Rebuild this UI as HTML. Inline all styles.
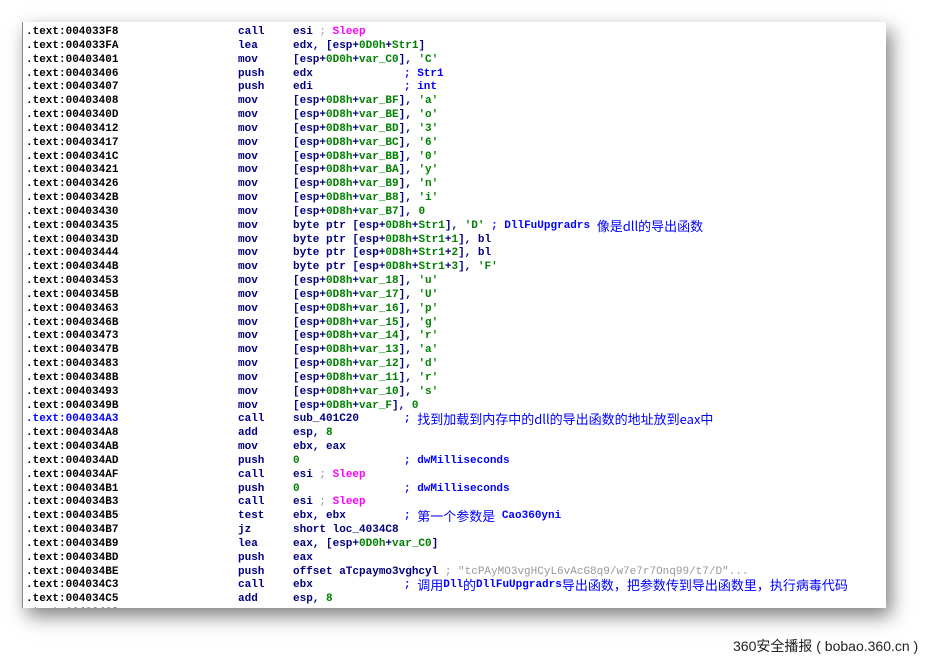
<!DOCTYPE html><html><head><meta charset="utf-8"><style>
body{margin:0;width:941px;height:664px;background:#fff;overflow:hidden;font-family:"Liberation Mono","Noto Sans CJK SC",monospace;}
#p{position:absolute;left:22px;top:22px;width:863px;height:586px;background:#fff;box-shadow:5px 8px 18px rgba(0,0,0,.5);overflow:hidden;border-left:1px solid #888}
.r{position:absolute;left:0;margin-top:2px;height:14px;font-size:11px;font-weight:bold;line-height:14px;white-space:pre;color:#000080}
.r span{position:absolute;top:0}
.a{left:3px;color:#000}.b{left:215px}.o{left:270px}.k{left:381px;color:#0000ff}
.g{position:static!important;color:#008000}.c{position:static!important;color:#0000ff}.m{position:static!important;color:#f0f}.s{position:static!important;color:#999;font-weight:normal}
.z{font-family:"Noto Sans CJK SC",sans-serif;font-weight:normal;font-size:13px;line-height:14px;vertical-align:top}
#f{position:absolute;left:733px;top:636px;font-family:"Liberation Sans","Noto Sans CJK SC",sans-serif;font-size:14px;color:#222}
</style></head><body><div id="p">
<div class="r" style="top:1px"><span class="a">.text:004033F8</span><span class="b">call</span><span class="o">esi <b class="s">;</b> <b class="m">Sleep</b></span></div>
<div class="r" style="top:15px"><span class="a">.text:004033FA</span><span class="b">lea</span><span class="o">edx, [esp+<b class="g">0D0h</b>+<b class="g">Str1</b>]</span></div>
<div class="r" style="top:29px"><span class="a">.text:00403401</span><span class="b">mov</span><span class="o">[esp+<b class="g">0D0h</b>+<b class="g">var_C0</b>], <b class="g">'C'</b></span></div>
<div class="r" style="top:43px"><span class="a">.text:00403406</span><span class="b">push</span><span class="o">edx</span><span class="k">; Str1</span></div>
<div class="r" style="top:56px"><span class="a">.text:00403407</span><span class="b">push</span><span class="o">edi</span><span class="k">; int</span></div>
<div class="r" style="top:70px"><span class="a">.text:00403408</span><span class="b">mov</span><span class="o">[esp+<b class="g">0D8h</b>+<b class="g">var_BF</b>], <b class="g">'a'</b></span></div>
<div class="r" style="top:84px"><span class="a">.text:0040340D</span><span class="b">mov</span><span class="o">[esp+<b class="g">0D8h</b>+<b class="g">var_BE</b>], <b class="g">'o'</b></span></div>
<div class="r" style="top:98px"><span class="a">.text:00403412</span><span class="b">mov</span><span class="o">[esp+<b class="g">0D8h</b>+<b class="g">var_BD</b>], <b class="g">'3'</b></span></div>
<div class="r" style="top:112px"><span class="a">.text:00403417</span><span class="b">mov</span><span class="o">[esp+<b class="g">0D8h</b>+<b class="g">var_BC</b>], <b class="g">'6'</b></span></div>
<div class="r" style="top:126px"><span class="a">.text:0040341C</span><span class="b">mov</span><span class="o">[esp+<b class="g">0D8h</b>+<b class="g">var_BB</b>], <b class="g">'0'</b></span></div>
<div class="r" style="top:139px"><span class="a">.text:00403421</span><span class="b">mov</span><span class="o">[esp+<b class="g">0D8h</b>+<b class="g">var_BA</b>], <b class="g">'y'</b></span></div>
<div class="r" style="top:153px"><span class="a">.text:00403426</span><span class="b">mov</span><span class="o">[esp+<b class="g">0D8h</b>+<b class="g">var_B9</b>], <b class="g">'n'</b></span></div>
<div class="r" style="top:167px"><span class="a">.text:0040342B</span><span class="b">mov</span><span class="o">[esp+<b class="g">0D8h</b>+<b class="g">var_B8</b>], <b class="g">'i'</b></span></div>
<div class="r" style="top:181px"><span class="a">.text:00403430</span><span class="b">mov</span><span class="o">[esp+<b class="g">0D8h</b>+<b class="g">var_B7</b>], <b class="g">0</b></span></div>
<div class="r" style="top:195px"><span class="a">.text:00403435</span><span class="b">mov</span><span class="o">byte ptr [esp+<b class="g">0D8h</b>+<b class="g">Str1</b>], <b class="g">'D'</b> <b class="c">; DllFuUpgradrs <b class="c z">像是dll的导出函数</b></b></span></div>
<div class="r" style="top:209px"><span class="a">.text:0040343D</span><span class="b">mov</span><span class="o">byte ptr [esp+<b class="g">0D8h</b>+<b class="g">Str1</b>+<b class="g">1</b>], bl</span></div>
<div class="r" style="top:222px"><span class="a">.text:00403444</span><span class="b">mov</span><span class="o">byte ptr [esp+<b class="g">0D8h</b>+<b class="g">Str1</b>+<b class="g">2</b>], bl</span></div>
<div class="r" style="top:236px"><span class="a">.text:0040344B</span><span class="b">mov</span><span class="o">byte ptr [esp+<b class="g">0D8h</b>+<b class="g">Str1</b>+<b class="g">3</b>], <b class="g">'F'</b></span></div>
<div class="r" style="top:250px"><span class="a">.text:00403453</span><span class="b">mov</span><span class="o">[esp+<b class="g">0D8h</b>+<b class="g">var_18</b>], <b class="g">'u'</b></span></div>
<div class="r" style="top:264px"><span class="a">.text:0040345B</span><span class="b">mov</span><span class="o">[esp+<b class="g">0D8h</b>+<b class="g">var_17</b>], <b class="g">'U'</b></span></div>
<div class="r" style="top:278px"><span class="a">.text:00403463</span><span class="b">mov</span><span class="o">[esp+<b class="g">0D8h</b>+<b class="g">var_16</b>], <b class="g">'p'</b></span></div>
<div class="r" style="top:292px"><span class="a">.text:0040346B</span><span class="b">mov</span><span class="o">[esp+<b class="g">0D8h</b>+<b class="g">var_15</b>], <b class="g">'g'</b></span></div>
<div class="r" style="top:305px"><span class="a">.text:00403473</span><span class="b">mov</span><span class="o">[esp+<b class="g">0D8h</b>+<b class="g">var_14</b>], <b class="g">'r'</b></span></div>
<div class="r" style="top:319px"><span class="a">.text:0040347B</span><span class="b">mov</span><span class="o">[esp+<b class="g">0D8h</b>+<b class="g">var_13</b>], <b class="g">'a'</b></span></div>
<div class="r" style="top:333px"><span class="a">.text:00403483</span><span class="b">mov</span><span class="o">[esp+<b class="g">0D8h</b>+<b class="g">var_12</b>], <b class="g">'d'</b></span></div>
<div class="r" style="top:347px"><span class="a">.text:0040348B</span><span class="b">mov</span><span class="o">[esp+<b class="g">0D8h</b>+<b class="g">var_11</b>], <b class="g">'r'</b></span></div>
<div class="r" style="top:361px"><span class="a">.text:00403493</span><span class="b">mov</span><span class="o">[esp+<b class="g">0D8h</b>+<b class="g">var_10</b>], <b class="g">'s'</b></span></div>
<div class="r" style="top:375px"><span class="a">.text:0040349B</span><span class="b">mov</span><span class="o">[esp+<b class="g">0D8h</b>+<b class="g">var_F</b>], <b class="g">0</b></span></div>
<div class="r" style="top:388px"><span class="a" style="color:#0000ff">.text:004034A3</span><span class="b">call</span><span class="o">sub_401C20</span><span class="k">; <b class="c z">找到加载到内存中的dll的导出函数的地址放到eax中</b></span></div>
<div class="r" style="top:402px"><span class="a">.text:004034A8</span><span class="b">add</span><span class="o">esp, <b class="g">8</b></span></div>
<div class="r" style="top:416px"><span class="a">.text:004034AB</span><span class="b">mov</span><span class="o">ebx, eax</span></div>
<div class="r" style="top:430px"><span class="a">.text:004034AD</span><span class="b">push</span><span class="o"><b class="g">0</b></span><span class="k">; dwMilliseconds</span></div>
<div class="r" style="top:444px"><span class="a">.text:004034AF</span><span class="b">call</span><span class="o">esi <b class="s">;</b> <b class="m">Sleep</b></span></div>
<div class="r" style="top:458px"><span class="a">.text:004034B1</span><span class="b">push</span><span class="o"><b class="g">0</b></span><span class="k">; dwMilliseconds</span></div>
<div class="r" style="top:471px"><span class="a">.text:004034B3</span><span class="b">call</span><span class="o">esi <b class="s">;</b> <b class="m">Sleep</b></span></div>
<div class="r" style="top:485px"><span class="a">.text:004034B5</span><span class="b">test</span><span class="o">ebx, ebx</span><span class="k">; <b class="c z">第一个参数是</b> Cao360yni</span></div>
<div class="r" style="top:499px"><span class="a">.text:004034B7</span><span class="b">jz</span><span class="o">short loc_4034C8</span></div>
<div class="r" style="top:513px"><span class="a">.text:004034B9</span><span class="b">lea</span><span class="o">eax, [esp+<b class="g">0D0h</b>+<b class="g">var_C0</b>]</span></div>
<div class="r" style="top:527px"><span class="a">.text:004034BD</span><span class="b">push</span><span class="o">eax</span></div>
<div class="r" style="top:541px"><span class="a">.text:004034BE</span><span class="b">push</span><span class="o">offset aTcpaymo3vghcyl <b class="s">; "tcPAyMO3vgHCyL6vAcG8q9/w7e7r7Onq99/t7/D"...</b></span></div>
<div class="r" style="top:554px"><span class="a">.text:004034C3</span><span class="b">call</span><span class="o">ebx</span><span class="k">; <b class="c z">调用</b>Dll<b class="c z">的</b>DllFuUpgradrs<b class="c z">导出函数，把参数传到导出函数里，执行病毒代码</b></span></div>
<div class="r" style="top:568px"><span class="a">.text:004034C5</span><span class="b">add</span><span class="o">esp, <b class="g">8</b></span></div>
<div class="r" style="top:582px"><span class="a">.text:004034C8</span></div>
</div>
<div id="f">360安全播报 ( bobao.360.cn )</div>
</body></html>
